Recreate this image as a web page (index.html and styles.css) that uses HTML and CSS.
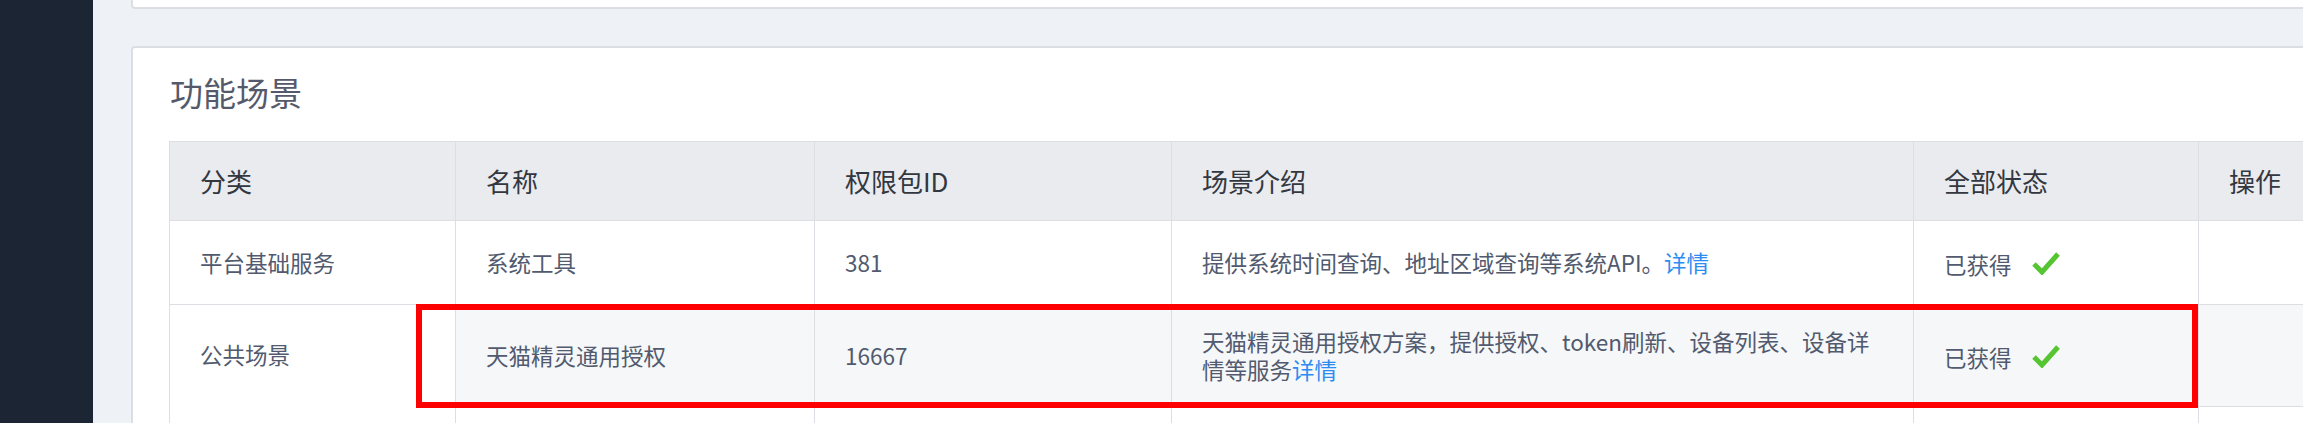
FILE: index.html
```html
<!DOCTYPE html>
<html lang="zh-CN">
<head>
<meta charset="utf-8">
<title>功能场景</title>
<link rel="stylesheet" href="styles.css">
</head>
<body>
<div class="layout">
  <aside class="sidebar"></aside>
  <main class="main">
    <div class="card card-prev"></div>
    <section class="card card-scenes">
      <h2 class="card-title">功能场景</h2>
      <div class="table-wrap">
        <table class="scene-table">
          <colgroup>
            <col class="col-cat">
            <col class="col-name">
            <col class="col-id">
            <col class="col-desc">
            <col class="col-status">
            <col class="col-op">
          </colgroup>
          <thead>
            <tr class="head-row">
              <th>分类</th>
              <th>名称</th>
              <th>权限包ID</th>
              <th>场景介绍</th>
              <th>全部状态</th>
              <th>操作</th>
            </tr>
          </thead>
          <tbody>
            <tr class="body-row">
              <td>平台基础服务</td>
              <td>系统工具</td>
              <td>381</td>
              <td>提供系统时间查询、地址区域查询等系统API。<a class="link" href="#">详情</a></td>
              <td><span class="status">已获得<svg class="check" width="28" height="24" viewBox="0 0 28 24"><polyline points="2,13 10,21 26,3" fill="none" stroke="#55c531" stroke-width="5"/></svg></span></td>
              <td></td>
            </tr>
            <tr class="body-row row-hover">
              <td rowspan="2" class="cat-cell">公共场景</td>
              <td>天猫精灵通用授权</td>
              <td>16667</td>
              <td>天猫精灵通用授权方案，提供授权、token刷新、设备列表、设备详情等服务<a class="link" href="#">详情</a></td>
              <td><span class="status">已获得<svg class="check" width="28" height="24" viewBox="0 0 28 24"><polyline points="2,13 10,21 26,3" fill="none" stroke="#55c531" stroke-width="5"/></svg></span></td>
              <td></td>
            </tr>
            <tr class="body-row">
              <td></td>
              <td></td>
              <td></td>
              <td></td>
              <td></td>
            </tr>
          </tbody>
        </table>
        <div class="highlight-box"></div>
      </div>
    </section>
  </main>
</div>
</body>
</html>
```

FILE: styles.css
```css
* {
  box-sizing: border-box;
}

html, body {
  margin: 0;
  padding: 0;
  height: 100%;
  overflow: hidden;
  background: #eef1f5;
  font-family: "Noto Sans CJK SC", "Noto Sans", sans-serif;
}

.layout {
  display: flex;
  min-height: 100vh;
}

.sidebar {
  flex: none;
  width: 93px;
  background: #1c2534;
}

.main {
  flex: none;
  width: 2440px;
  padding-left: 38px;
  display: flex;
  flex-direction: column;
  gap: 37px;
}

.card {
  background: #ffffff;
  border: 2px solid #dcdee3;
  border-radius: 4px;
}

.card-prev {
  height: 9px;
  border-top: none;
  border-radius: 0 0 4px 4px;
}

.card-scenes {
  padding: 19px 36px 0 36px;
  border-bottom: none;
  border-radius: 4px 4px 0 0;
}

.card-title {
  margin: 0 0 24px 1px;
  font-size: 33px;
  line-height: 50px;
  font-weight: 400;
  color: #555a6b;
}

.table-wrap {
  position: relative;
}

.scene-table {
  table-layout: fixed;
  border-collapse: separate;
  border-spacing: 0;
  width: 2316px;
  border-top: 1px solid #dcdee3;
  border-left: 1px solid #dcdee3;
}

.col-cat { width: 286px; }
.col-name { width: 359px; }
.col-id { width: 357px; }
.col-desc { width: 742px; }
.col-status { width: 285px; }
.col-op { width: 286px; }

.scene-table th,
.scene-table td {
  border-right: 1px solid #dcdee3;
  border-bottom: 1px solid #dcdee3;
  text-align: left;
  padding: 23px 30px;
}

.scene-table th {
  background: #e9ebef;
  font-size: 26px;
  font-weight: 400;
  color: #333740;
  line-height: 32px;
  padding-top: 0;
  padding-bottom: 0;
}

.head-row {
  height: 79px;
}

.scene-table td {
  font-size: 22.5px;
  line-height: 27.5px;
  color: #515a6e;
  background: #ffffff;
  vertical-align: middle;
}

.body-row {
  height: 84px;
}

.row-hover td {
  background: #f6f7f9;
}

.row-hover td.cat-cell {
  background: #ffffff;
  vertical-align: top;
  padding-top: 36px;
}

.link {
  color: #2d8cf0;
  text-decoration: none;
}

.status {
  display: inline-flex;
  align-items: center;
  gap: 20px;
  padding-top: 4px;
}

.check {
  display: block;
  margin-top: -4px;
}

.highlight-box {
  position: absolute;
  left: 247px;
  top: 163px;
  width: 1782px;
  height: 104px;
  border: 6px solid #ff0000;
  pointer-events: none;
}
```
